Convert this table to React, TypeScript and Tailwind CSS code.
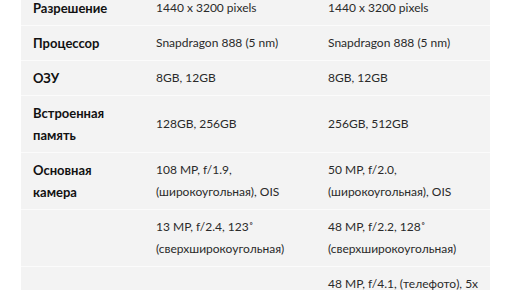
import React from 'react';

type Row = { label: string[]; a: string[]; b: string[] };

const rows: Row[] = [
  { label: ['Разрешение'], a: ['1440 x 3200 pixels'], b: ['1440 x 3200 pixels'] },
  { label: ['Процессор'], a: ['Snapdragon 888 (5 nm)'], b: ['Snapdragon 888 (5 nm)'] },
  { label: ['ОЗУ'], a: ['8GB, 12GB'], b: ['8GB, 12GB'] },
  { label: ['Встроенная', 'память'], a: ['128GB, 256GB'], b: ['256GB, 512GB'] },
  {
    label: ['Основная', 'камера'],
    a: ['108 MP, f/1.9,', '(широкоугольная), OIS'],
    b: ['50 MP, f/2.0,', '(широкоугольная), OIS'],
  },
  {
    label: [],
    a: ['13 MP, f/2.4, 123˚', '(сверхширокоугольная)'],
    b: ['48 MP, f/2.2, 128˚', '(сверхширокоугольная)'],
  },
  {
    label: [],
    a: ['5 MP, f/2.4, (макро)'],
    b: ['48 MP, f/4.1, (телефото), 5x', 'оптический зум, OIS,', '120x цифровой зум'],
  },
];

const Lines: React.FC<{ lines: string[] }> = ({ lines }) => (
  <>
    {lines.map((l, i) => (
      <div key={i} className="whitespace-nowrap">
        {l}
      </div>
    ))}
  </>
);

const App: React.FC = () => {
  return (
    <div className="w-[516px] h-[290px] overflow-hidden bg-white font-['Lato',sans-serif] text-[12px] leading-[22px] text-[#2a2a2a]">
      <div className="-mt-[9px] ml-[21px] w-[469px]">
        <table className="w-full border-collapse bg-[#f3f3f3] table-fixed">
          <colgroup>
            <col className="w-[123px]" />
            <col className="w-[172px]" />
            <col className="w-[174px]" />
          </colgroup>
          <tbody>
            {rows.map((r, i) => (
              <tr key={i} className="border-b border-[#fbfbfb]">
                <td className="pl-3 pr-2 py-[6px] align-middle text-[13px] font-bold text-[#111]">
                  <Lines lines={r.label} />
                </td>
                <td className="pl-3 pr-2 py-[6px] align-middle">
                  <Lines lines={r.a} />
                </td>
                <td className="pl-3 pr-2 py-[6px] align-middle">
                  <Lines lines={r.b} />
                </td>
              </tr>
            ))}
          </tbody>
        </table>
      </div>
    </div>
  );
};

export default App;
